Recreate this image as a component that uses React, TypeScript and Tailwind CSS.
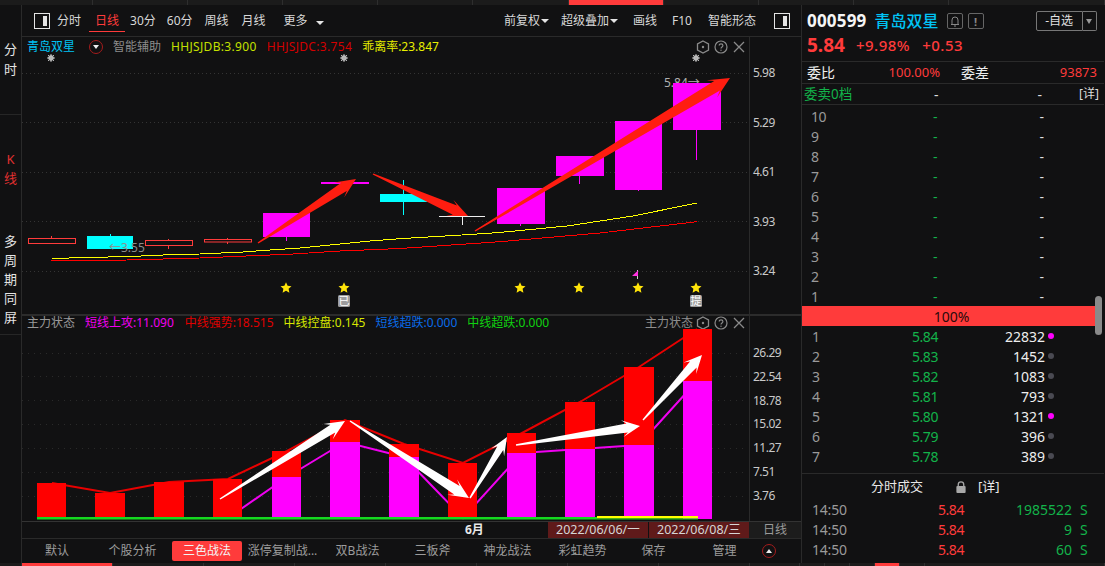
const arrowPts = (x1: number, y1: number, x2: number, y2: number, neckW: number, headW: number, headLen: number) => {
  const dx = x2 - x1, dy = y2 - y1, len = Math.hypot(dx, dy);
  const ux = dx / len, uy = dy / len, nx = -uy, ny = ux;
  const nb = headLen * 0.72;
  const p = (d: number, w: number) => `${(x2 - ux * d + nx * w).toFixed(1)},${(y2 - uy * d + ny * w).toFixed(1)}`;
  return [p(len, 0.7), p(nb, neckW / 2), p(headLen, headW / 2), p(0, 0), p(headLen, -headW / 2), p(nb, -neckW / 2), p(len, -0.7)].join(" ");
};

const Star = ({ x, y }: { x: number; y: number }) => {
  const pts: string[] = [];
  for (let i = 0; i < 10; i++) {
    const r = i % 2 === 0 ? 5.8 : 2.7;
    const a = -Math.PI / 2 + (i * Math.PI) / 5;
    pts.push(`${(x + r * Math.cos(a)).toFixed(1)},${(y + r * Math.sin(a)).toFixed(1)}`);
  }
  return <polygon points={pts.join(" ")} fill="#ffe40a" />;
};

const Sun = ({ x, y }: { x: number; y: number }) => (
  <g stroke="#b5b5b5" strokeWidth="1">
    <circle cx={x} cy={y} r="2.4" fill="#c8c8c8" />
    <line x1={x - 4} y1={y} x2={x + 4} y2={y} />
    <line x1={x} y1={y - 4} x2={x} y2={y + 4} />
    <line x1={x - 3} y1={y - 3} x2={x + 3} y2={y + 3} />
    <line x1={x - 3} y1={y + 3} x2={x + 3} y2={y - 3} />
  </g>
);

const PanelIcons = () => (
  <div className="flex items-center gap-[4px]">
    <svg width="14" height="14" viewBox="0 0 14 14" fill="none" stroke="#8a8a8a" strokeWidth="1.3">
      <polygon points="7,1 12.5,4 12.5,10 7,13 1.5,10 1.5,4" />
      <circle cx="7" cy="7" r="1.2" fill="#8a8a8a" stroke="none" />
    </svg>
    <svg width="14" height="14" viewBox="0 0 14 14" fill="none" stroke="#8a8a8a" strokeWidth="1.2">
      <circle cx="7" cy="7" r="6" />
      <path d="M5.2 5.6c0-2.3 3.7-2.3 3.7 0 0 1.4-1.9 1.4-1.9 3" />
      <circle cx="7" cy="10.2" r=".7" fill="#8a8a8a" stroke="none" />
    </svg>
    <svg width="14" height="14" viewBox="0 0 14 14" fill="none" stroke="#8a8a8a" strokeWidth="1.3">
      <path d="M2 2l10 10M12 2L2 12" />
    </svg>
  </div>
);

const BoxIcon = () => (
  <span className="flex h-[16px] w-[16px] justify-end border border-[#e5e5e5] py-[2px] pr-[2px]">
    <span className="w-[4px] bg-[#e5e5e5]" />
  </span>
);

const Caret = () => (
  <span className="ml-[1px] inline-block h-0 w-0 border-x-[4px] border-t-[4px] border-x-transparent border-t-[#e5e5e5]" />
);

const Toolbar = () => (
  <div className="flex h-[32px] items-center border-b border-[#2a2a2a] text-[12px] text-[#d8d8d8]">
    <div className="ml-[12px]"><BoxIcon /></div>
    <span className="ml-[7px]">分时</span>
    <span className="relative ml-[14px] text-[#ff3b3b]">
      日线
      <span className="absolute -left-[6px] -right-[6px] top-[19px] h-[1.5px] bg-[#ff3b3b]" />
    </span>
    <span className="ml-[11px]">30分</span>
    <span className="ml-[11px]">60分</span>
    <span className="ml-[12px]">周线</span>
    <span className="ml-[13px]">月线</span>
    <span className="ml-[18px]">更多</span>
    <span className="ml-[7px]"><Caret /></span>
    <span className="ml-auto">前复权</span><Caret />
    <span className="ml-[12px]">超级叠加</span><Caret />
    <span className="ml-[15px]">画线</span>
    <span className="ml-[15px]">F10</span>
    <span className="ml-[16px]">智能形态</span>
    <div className="ml-[18px] mr-[11px]"><BoxIcon /></div>
  </div>
);

const KChart = () => {
  const hollow = [[28, 47, 238, 5, 51, 236, 244], [145, 47, 240, 5, 168, 239, 249], [204, 47, 239, 2.5, 227, 238, 244]];
  const solid = [
    [263, 47, 213, 24, 286, 241, "#ff00ff"], [321, 48, 182, 2, 345, 182, "#ff00ff"], [497, 48, 188, 36, 520, 226, "#ff00ff"],
    [556, 48, 156, 20, 579, 184, "#ff00ff"], [615, 47, 121, 69, 638, 191, "#ff00ff"], [673, 48, 83, 47, 696, 160, "#ff00ff"],
  ] as const;
  return (
    <svg className="block overflow-visible" width="727" height="258" viewBox="22 56 727 258">
      {[73, 122, 172, 221, 271].map((y) => (
        <line key={y} x1="22" y1={y + 0.5} x2="748" y2={y + 0.5} stroke="#343434" strokeDasharray="1 3" />
      ))}
      {[51, 344, 696].map((x) => <Sun key={x} x={x} y={58} />)}
      {hollow.map(([x, w, y, h, wx, w1, w2]) => (
        <g key={x} stroke="#ff3b3b" fill="#111112">
          <line x1={wx + 0.5} y1={w1} x2={wx + 0.5} y2={w2} />
          <rect x={x + 0.5} y={y + 0.5} width={w} height={h} />
        </g>
      ))}
      <line x1="110.5" y1="234" x2="110.5" y2="238" stroke="#00ffff" />
      <rect x="87" y="236" width="46" height="13" fill="#00ffff" />
      <line x1="403.5" y1="180" x2="403.5" y2="215" stroke="#00ffff" />
      <rect x="380" y="194" width="47" height="8" fill="#00ffff" />
      <text x="109" y="252" fontSize="12" fill="#8d8d8d">←3.55</text>
      <text x="664" y="87" fontSize="12" fill="#b0b0b0">5.84→</text>
      {solid.map(([x, w, y, h, wx, w2, c]) => (
        <g key={x} fill={c} stroke="none">
          <rect x={wx} y={y} width="1" height={w2 - y} />
          <rect x={x} y={y} width={w} height={h} />
        </g>
      ))}
      <line x1="439" y1="216.5" x2="485" y2="216.5" stroke="#eee" />
      <line x1="462.5" y1="216" x2="462.5" y2="225" stroke="#eee" />
      <polyline fill="none" stroke="#ffff00" strokeWidth="1" shapeRendering="crispEdges" points="52,258.5 87,257.5 130,256.5 163,255 200,254 243,252 270,250 300,248 330,245 370,241 400,238.7 470,234.5 497,232.7 567,226 633,216 697,203" />
      <polyline fill="none" stroke="#ff0000" strokeWidth="1" shapeRendering="crispEdges" points="51,261 127,260 200,258 293,254 340,251 400,248.5 500,241.7 600,233 697,221.7" />
      <polygon points={arrowPts(258, 243, 356, 179, 10, 18, 20)} fill="#ff1d10" />
      <polygon points={arrowPts(373, 174, 468, 216, 10, 18, 20)} fill="#ff1d10" />
      <polygon points={arrowPts(475, 231, 730, 78, 11, 20, 21)} fill="#ff1d10" />
      <line x1="637.5" y1="270" x2="637.5" y2="279" stroke="#ccc" strokeWidth="1" />
      <path d="M638 270.5l-6 5.5h6z" fill="#ff33e0" />
      {[286, 344, 520, 579, 638, 696].map((x) => <Star key={x} x={x} y={288} />)}
      {[[344, "已"], [696, "提"]].map(([x, t]) => (
        <g key={x as number}>
          <rect x={(x as number) - 6} y="295" width="12" height="12" rx="1.5" fill="#9c9c9c" />
          <text x={x as number} y="305" fontSize="11" textAnchor="middle" fill="#ffffff">{t}</text>
        </g>
      ))}
    </svg>
  );
};

const IndChart = () => {
  const bars = [
    [37, 29, 483, 518], [95, 30, 493, 518], [154, 30, 482, 518], [213, 29, 479, 518], [272, 29, 451, 477], [330, 30, 420, 442],
    [389, 30, 444, 457], [448, 29, 463, 518], [507, 29, 433, 453], [565, 30, 402, 449], [624, 30, 367, 445], [683, 29, 329, 381],
  ];
  return (
    <svg className="block overflow-visible" width="727" height="190" viewBox="22 330 727 190">
      {[353, 376, 400, 424, 448, 472, 496].map((y) => (
        <line key={y} x1="22" y1={y + 0.5} x2="748" y2={y + 0.5} stroke="#2a2a2a" strokeDasharray="1 5" />
      ))}
      <polyline fill="none" stroke="#e80000" strokeWidth="2" points="52,483 110,493 169,482 228,479 287,451 345,420 404,444 463,463 522,433 580,402 639,367 697,329" />
      <polyline fill="none" stroke="#f000f0" strokeWidth="2" points="228,518 287,477 345,442 404,457 463,518 522,453 580,449 639,445 697,381" />
      {bars.map(([x, w, top, mid]) => (
        <g key={x}>
          <rect x={x} y={top} width={w} height={mid - top} fill="#ff0000" />
          {mid < 518 && <rect x={x} y={mid} width={w} height={518 - mid + (x === 683 ? 1 : 0)} fill="#ff00ff" />}
        </g>
      ))}
      <rect x="37" y="517" width="560" height="2.5" fill="#14d81f" />
      <rect x="597" y="516" width="101" height="2.5" fill="#ffff00" />
      <rect x="597" y="518.5" width="101" height="1" fill="#14d81f" />
      {[
        [220, 499, 345, 421, 9, 18, 20], [350, 421, 469, 498, 10, 18, 20], [470, 498, 507, 437, 7, 15, 18],
        [516, 445, 640, 426, 9, 17, 18], [643, 420, 702, 355, 9, 17, 18],
      ].map(([a, b, c, d, n, h, l]) => (
        <polygon key={a} points={arrowPts(a, b, c, d, n, h, l)} fill="#ffffff" />
      ))}
    </svg>
  );
};

const Axis = ({ labels, top, step }: { labels: string[]; top: string; step: string }) => (
  <div className={`flex w-[52px] shrink-0 flex-col border-l border-[#2a2a2a] pl-[3px] text-[12px] leading-[16px] tracking-[-0.5px] text-[#c9c9c9] ${top}`}>
    {labels.map((l) => (
      <div key={l} className={step}>{l}</div>
    ))}
  </div>
);

const Sidebar = () => (
  <div className="flex w-[22px] shrink-0 flex-col items-center border-r border-[#2a2a2a] text-[13px] text-[#e5e5e5]">
    <div className="flex h-[110px] w-full flex-col items-center border-b border-[#262626] pt-[34px] leading-[20px]">
      <span>分</span><span>时</span>
    </div>
    <div className="flex h-[110px] w-full flex-col items-center pt-[35px] leading-[19px] text-[#e03030]">
      <span>K</span><span>线</span>
    </div>
    <div className="flex h-[110px] w-full flex-col items-center border-b border-[#262626] pt-[7px] leading-[19px]">
      <span>多</span><span>周</span><span>期</span><span>同</span><span>屏</span>
    </div>
  </div>
);

const TABS: [string, string][] = [
  ["默认", "w-[73px] pr-[3px]"], ["个股分析", "w-[75px]"], ["三色战法", "ml-[2px] mr-[3px] w-[70px] rounded-[2px] bg-[#ff3b3b] text-[#f3f3f3]"], ["涨停复制战...", "w-[75px]"], ["双B战法", "w-[75px]"],
  ["三板斧", "w-[75px]"], ["神龙战法", "w-[75px]"], ["彩虹趋势", "w-[75px]"], ["保存", "w-[67px]"], ["管理", "w-[75px]"],
];

const Tabs = () => (
  <div className="flex h-[25px] items-center border-t border-[#2a2a2a] text-[12px] text-[#9c9c9c]">
    {TABS.map(([t, w]) => (
      <div key={t} className={`flex h-[20px] items-center justify-center whitespace-nowrap ${w}`}>
        {t}
      </div>
    ))}
    <span className="flex h-[14px] w-[14px] items-center justify-center rounded-full border border-[#a51c1c]">
      <span className="h-0 w-0 border-x-[3.5px] border-b-[4px] border-x-transparent border-b-[#eee]" />
    </span>
  </div>
);

const Center = () => (
  <div className="flex w-[779px] shrink-0 flex-col">
    <Toolbar />
    <div className="flex h-[277px]">
      <div className="w-[727px]">
        <div className="flex h-[19px] items-center text-[12px] whitespace-nowrap">
          <span className="ml-[5px] text-[#00c3f5]">青岛双星</span>
          <span className="ml-[14px] flex h-[14px] w-[14px] items-center justify-center rounded-full border border-[#a51c1c]">
            <span className="h-0 w-0 border-x-[3.5px] border-t-[4px] border-x-transparent border-t-[#eee]" />
          </span>
          <span className="ml-[10px] text-[#8c8c8c]">智能辅助</span>
          <span className="ml-[10px] tracking-[0.33px] text-[#c4e000]">HHJSJDB:3.900</span>
          <span className="ml-[10px] tracking-[0.33px] text-[#d40000]">HHJSJDC:3.754</span>
          <span className="ml-[10px] text-[#e8f000]">乖离率:23.847</span>
          <div className="ml-auto mr-[3px]"><PanelIcons /></div>
        </div>
        <KChart />
      </div>
      <Axis labels={["5.98", "5.29", "4.61", "3.93", "3.24"]} top="pt-[28px]" step="h-[49.5px]" />
    </div>
    <div className="flex h-[207px] border-t-2 border-[#2c2c2c]">
      <div className="w-[727px]">
        <div className="flex h-[14px] items-center text-[12px] whitespace-nowrap">
          <span className="ml-[5px] text-[#9a9a9a]">主力状态</span>
          <span className="ml-[10px] text-[#f000f0]">短线上攻:11.090</span>
          <span className="ml-[11px] text-[#e00000]">中线强势:18.515</span>
          <span className="ml-[10px] text-[#d8e800]">中线控盘:0.145</span>
          <span className="ml-[10px] text-[#0a6ce8]">短线超跌:0.000</span>
          <span className="ml-[10px] text-[#10d010]">中线超跌:0.000</span>
          <span className="ml-auto mr-[3px] text-[#8e8e8e]">主力状态</span>
          <div className="mr-[3px]"><PanelIcons /></div>
        </div>
        <IndChart />
      </div>
      <Axis labels={["26.29", "22.54", "18.78", "15.02", "11.27", "7.51", "3.76"]} top="pt-[29px]" step="h-[23.75px]" />
    </div>
    <div className="flex h-[17px] items-center border-t border-[#333] text-[12px]">
      <span className="ml-[443px] font-bold text-[#e8e8e8]">6月</span>
      <span className="ml-[64px] flex h-full w-[100px] items-center justify-center bg-[#5f1a1a] text-[12.5px] text-[#d6d6d6]">2022/06/06/一</span>
      <span className="ml-[1px] flex h-full w-[100px] items-center justify-center bg-[#5f1a1a] text-[12.5px] text-[#d6d6d6]">2022/06/08/三</span>
      <span className="flex h-full flex-1 items-center justify-center bg-[#1c1c1c] text-[#9a9a9a]">日线</span>
    </div>
    <Tabs />
  </div>
);

const SELL = ["10", "9", "8", "7", "6", "5", "4", "3", "2", "1"];
const BUY: [string, string, string, boolean][] = [
  ["1", "5.84", "22832", true], ["2", "5.83", "1452", false], ["3", "5.82", "1083", false], ["4", "5.81", "793", false],
  ["5", "5.80", "1321", true], ["6", "5.79", "396", false], ["7", "5.78", "389", false],
];
const TRADES = [["14:50", "5.84", "1985522"], ["14:50", "5.84", "9"], ["14:50", "5.84", "60"]];

const RightPanel = () => (
  <div className="flex w-[303px] shrink-0 flex-col border-l border-[#2a2a2a] text-[14px]">
    <div className="flex h-[25px] items-center pt-[7px]">
      <span className="ml-[5px] text-[17px] font-bold tracking-[0.2px] text-[#f5f5f5]">000599</span>
      <span className="ml-[8px] text-[16px] font-medium text-[#00c3f5]">青岛双星</span>
      <span className="ml-[8px] flex h-[16px] w-[16px] items-center justify-center rounded-[2px] border border-[#666]">
        <svg width="12" height="12" viewBox="0 0 12 12" fill="none" stroke="#888" strokeWidth="1">
          <path d="M2 9.5h8M3 9.5V5a3 3 0 0 1 6 0v4.5M5 11h2" />
        </svg>
      </span>
      <span className="ml-[5px] flex h-[16px] w-[16px] items-center justify-center rounded-[2px] border border-[#666] text-[11px] leading-none font-bold text-[#888]">!</span>
      <span className="ml-[52px] flex h-[20px] w-[47px] items-center justify-center rounded-l-[2px] border border-[#777] text-[12px] text-[#e0e0e0]">-自选</span>
      <span className="flex h-[20px] w-[14px] items-center justify-center rounded-r-[2px] border border-l-0 border-[#777]">
        <span className="h-0 w-0 border-x-[3.5px] border-t-[5px] border-x-transparent border-t-[#999]" />
      </span>
    </div>
    <div className="flex h-[31px] items-center font-medium whitespace-nowrap text-[#ff3b3b]">
      <span className="ml-[5px] text-[19px] font-bold">5.84</span>
      <span className="ml-[11px] text-[15px] tracking-[0.5px]">+9.98%</span>
      <span className="ml-[12px] text-[15px] tracking-[0.5px]">+0.53</span>
    </div>
    <div className="flex h-[23px] items-center border-y border-[#2a2a2a] text-[13px] text-[#ff3b3b]">
      <span className="ml-[5px] text-[14px] text-[#eee]">委比</span>
      <span className="ml-[50px] w-[55px] text-right">100.00%</span>
      <span className="ml-[21px] text-[14px] text-[#eee]">委差</span>
      <span className="ml-auto mr-[7px]">93873</span>
    </div>
    <div className="flex h-[21px] items-center border-b border-[#2a2a2a] text-[#13b34a]">
      <span className="ml-[2px] w-[130px] text-[13.5px]">委卖0档</span>
      <span className="w-[10px] text-[#ddd]">-</span>
      <span className="w-[98px] text-right text-[#ddd]">-</span>
      <span className="ml-auto mr-[5px] text-[12px] text-[#ddd]">[详]</span>
    </div>
    <div className="flex">
      <div className="w-[294px]">
        <div className="pt-[1px]">
          {SELL.map((s) => (
            <div key={s} className="flex h-[20px] items-center">
              <span className="w-[110px] pl-[9px] tracking-[-0.4px] text-[#9a9a9a]">{s}</span>
              <span className="w-[70px] pl-[21px] text-[#13b34a]">-</span>
              <span className="w-[62px] text-right text-[#ddd]">-</span>
            </div>
          ))}
        </div>
        <div className="flex h-[20px] items-center justify-center bg-[#ff3b3b] pl-[6px] text-[#2a0a0a]">100%</div>
        {BUY.map(([n, p, q, hot]) => (
          <div key={n} className="flex h-[20px] items-center">
            <span className="w-[110px] pl-[10px] text-[#9a9a9a]">{n}</span>
            <span className="w-[70px] tracking-[-0.45px] text-[#13b34a]">{p}</span>
            <span className="w-[63px] text-right text-[#eee]">{q}</span>
            <span className={`ml-[3px] h-[6px] w-[6px] rounded-full ${hot ? "bg-[#ff00ff]" : "bg-[#4a4a52]"}`} />
          </div>
        ))}
      </div>
      <div className="w-[9px] pt-[191px]">
        <div className="h-[39px] w-[7px] rounded-full bg-[#8a8a8a]" />
      </div>
    </div>
    <div className="mt-[7px] flex h-[26px] items-center border-t border-[#2a2a2a] text-[13px] text-[#e8e8e8]">
      <span className="ml-[69px]">分时成交</span>
      <svg className="ml-[32px]" width="12" height="14" viewBox="0 0 13 14">
        <path d="M3.5 6V4.5a3 3 0 0 1 6 0V6" fill="none" stroke="#a8a8a8" strokeWidth="1.4" />
        <rect x="1.5" y="6" width="10" height="7.5" rx="1" fill="#a8a8a8" />
      </svg>
      <span className="ml-[11px]">[详]</span>
    </div>
    {TRADES.map(([t, p, v], i) => (
      <div key={i} className="flex h-[20px] items-center">
        <span className="w-[136px] pl-[10px] tracking-[-0.2px] text-[#9a9a9a]">{t}</span>
        <span className="w-[26px] tracking-[-0.45px] text-[#ff3b3b]">{p}</span>
        <span className="ml-[38px] w-[70px] text-right text-[#13b34a]">{v}</span>
        <span className="ml-[8px] text-[#13b34a]">S</span>
      </div>
    ))}
  </div>
);

const Strip = ({ h, cells }: { h: string; cells: [string, boolean][] }) => (
  <div className={`flex shrink-0 bg-[#1b1b1b] ${h}`}>
    {cells.map(([w, on], i) => (
      <div key={i} className={`${w} border-r border-[#2e2e2e] ${on ? "bg-[#ff3b3b]" : ""}`} />
    ))}
  </div>
);

export default function App() {
  return (
    <div className="flex h-[566px] w-[1105px] flex-col overflow-hidden bg-[#111112] font-['Noto_Sans','Noto_Sans_CJK_SC',sans-serif] text-[#ddd]">
      <Strip
        h="h-[5px]"
        cells={[["w-[93px]", false], ["w-[95px]", false], ["w-[95px]", false], ["w-[95px]", false], ["w-[95px]", false], ["w-[96px]", false], ["w-[95px]", true], ["w-[95px]", false], ["w-[95px]", false], ["w-[95px]", false], ["flex-1", false]]}
      />
      <div className="flex min-h-0 flex-1">
        <Sidebar />
        <Center />
        <RightPanel />
      </div>
      <Strip
        h="h-[3px]"
        cells={[["w-[22px]", false], ["w-[91px]", true], ["w-[91px]", false], ["w-[91px]", false], ["w-[91px]", false], ["w-[91px]", false], ["w-[91px]", false], ["w-[91px]", false], ["w-[91px]", false], ["w-[50px]", false], ["w-[25px]", false], ["w-[25px]", false], ["w-[25px]", false], ["w-[25px]", true], ["w-[25px]", false], ["flex-1", false]]}
      />
    </div>
  );
}
